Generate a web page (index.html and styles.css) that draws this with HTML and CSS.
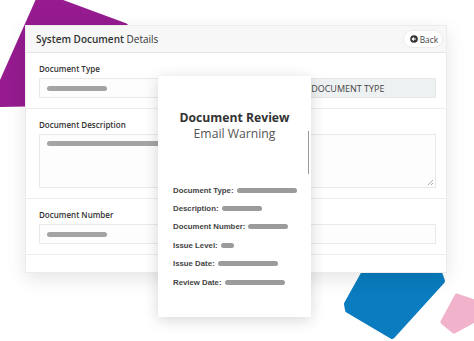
FILE: index.html
```html
<!DOCTYPE html>
<html lang="en">
<head>
  <meta charset="UTF-8" />
  <meta name="viewport" content="width=device-width, initial-scale=1.0" />
  <title>System Document Details</title>
  <link rel="stylesheet" href="styles.css">
</head>
<body>
  <svg class="shapes" width="474" height="341" viewBox="0 0 474 341">
    <polygon class="shape-purple" points="41,-5 125,26 100,102 -4,104 -2,92" />
    <polygon class="shape-blue" points="366,270 438,270 442,281 392,336 348,310 347,304" />
    <polygon class="shape-pink" points="457,296 480,304 478,318 454,331 443,322" />
  </svg>

  <div class="card">
    <div class="card-header">
      <h1><strong>System Document</strong> Details</h1>
      <button class="back">
        <svg width="8" height="8" viewBox="0 0 9 9">
          <circle cx="4.5" cy="4.5" r="4.3" fill="#333" />
          <path d="M6.7 4.5H2.8M4.4 2.8 2.7 4.5l1.7 1.7" stroke="#fff" stroke-width="1.4" fill="none" />
        </svg>
        Back
      </button>
    </div>

    <div class="section">
      <label>Document Type</label>
      <div class="field-row">
        <div class="input input-half"><span class="bar bar-md"></span></div>
        <div class="select">SELECTED DOCUMENT TYPE</div>
      </div>
    </div>

    <div class="section">
      <label>Document Description</label>
      <div class="input textarea"><span class="bar bar-xl"></span></div>
    </div>

    <div class="section">
      <label>Document Number</label>
      <div class="input"><span class="bar bar-md"></span></div>
    </div>

    <div class="card-footer"></div>
  </div>

  <div class="popup">
    <h2>Document Review</h2>
    <p class="subtitle">Email Warning</p>
    <div class="scroll-thumb"></div>
    <ul class="facts">
      <li>Document Type: <span class="pill pill-lg"></span></li>
      <li>Description: <span class="pill pill-md"></span></li>
      <li>Document Number: <span class="pill pill-md"></span></li>
      <li>Issue Level: <span class="pill pill-xs"></span></li>
      <li>Issue Date: <span class="pill pill-lg"></span></li>
      <li>Review Date: <span class="pill pill-lg"></span></li>
    </ul>
  </div>
</body>
</html>
```

FILE: styles.css
```css
body {
  margin: 0;
  width: 474px;
  height: 341px;
  overflow: hidden;
  background: #fff;
  font-family: 'Open Sans', sans-serif;
  color: #333;
  position: relative;
}

/* decorative blobs behind the card */
.shapes {
  position: absolute;
  left: 0;
  top: 0;
}
.shape-purple { fill: #951b8f; stroke: #951b8f; stroke-width: 6; stroke-linejoin: round; }
.shape-blue   { fill: #0a7cbf; stroke: #0a7cbf; stroke-width: 6; stroke-linejoin: round; }
.shape-pink   { fill: #f1b3cb; stroke: #f1b3cb; stroke-width: 5; stroke-linejoin: round; }

.card {
  position: relative;
  margin: 25px 0 0 25px;
  width: 422px;
  background: #fff;
  border: 1px solid #ececec;
  box-sizing: border-box;
  box-shadow: 0 6px 18px rgba(0, 0, 0, 0.1);
}

.card-header {
  height: 27px;
  box-sizing: border-box;
  display: flex;
  align-items: center;
  justify-content: space-between;
  padding: 0 3px 0 10px;
  background: #f7f7f7;
  border-bottom: 1px solid #e6e6e6;
}
.card-header h1 {
  margin: 0;
  font-size: 10px;
  font-weight: 400;
  color: #333;
}
.card-header h1 strong { font-weight: 600; }

.back {
  display: flex;
  align-items: center;
  gap: 2px;
  height: 18px;
  padding: 0 4px 0 6px;
  border: 1px solid #ececec;
  border-radius: 9px;
  background: #fff;
  font-family: 'Open Sans', sans-serif;
  font-size: 8.3px;
  color: #444;
}

.section {
  padding: 10px 10px 10px 13px;
  border-bottom: 1px solid #ececec;
  display: flex;
  flex-direction: column;
}
.section label {
  font-size: 8px;
  font-weight: 600;
  line-height: 12px;
  margin: 0 0 3px 0;
  color: #333;
}

.field-row { display: flex; }

.input {
  position: relative;
  height: 20px;
  box-sizing: border-box;
  border: 1px solid #e9e9e9;
  background: #fdfdfd;
  padding: 0 7px;
  display: flex;
  align-items: center;
}
.input-half { width: 200px; }
.textarea {
  height: 54px;
  align-items: flex-start;
  padding-top: 6px;
}
.textarea::after {
  content: "";
  position: absolute;
  right: 2px;
  bottom: 2px;
  width: 5px;
  height: 5px;
  background: linear-gradient(135deg, transparent 45%, #aaa 45%, #aaa 55%, transparent 55%, transparent 75%, #aaa 75%, #aaa 85%, transparent 85%);
}

.select {
  flex: 1;
  height: 20px;
  background: #eef1f1;
  border: 1px solid #e6e8e8;
  box-sizing: border-box;
  display: flex;
  align-items: center;
  padding-left: 27px;
  font-size: 9px;
  color: #444;
}

.bar {
  display: block;
  height: 5px;
  border-radius: 3px;
  background: #a4a4a4;
}
.bar-md { width: 60px; }
.bar-xl { width: 200px; }

.card-footer { height: 17px; }

/* floating review popup */
.popup {
  position: absolute;
  left: 158px;
  top: 76px;
  width: 153px;
  height: 241px;
  box-sizing: border-box;
  padding: 34px 0 0 15px;
  background: #fff;
  box-shadow: 0 3px 14px rgba(0, 0, 0, 0.16);
}
.popup h2 {
  margin: 0 0 0 -15px;
  font-size: 12.2px;
  font-weight: 700;
  line-height: 16px;
  text-align: center;
  color: #333;
}
.popup .subtitle {
  margin: 0 0 0 -15px;
  font-size: 12.2px;
  line-height: 16px;
  text-align: center;
  color: #555;
}
.scroll-thumb {
  position: absolute;
  right: 2px;
  top: 55px;
  width: 1.5px;
  height: 43px;
  background: #999;
}

.facts {
  list-style: none;
  margin: 39px 0 0 0;
  padding: 0;
}
.facts li {
  display: flex;
  align-items: center;
  height: 18.4px;
  font-family: 'Liberation Sans', Arial, sans-serif;
  font-size: 7.8px;
  font-weight: 700;
  color: #444;
}
.pill {
  display: inline-block;
  height: 5px;
  margin-left: 3px;
  border-radius: 3px;
  background: #9b9b9b;
}
.pill-lg { width: 60px; }
.pill-md { width: 40px; }
.pill-xs { width: 13px; }
```
